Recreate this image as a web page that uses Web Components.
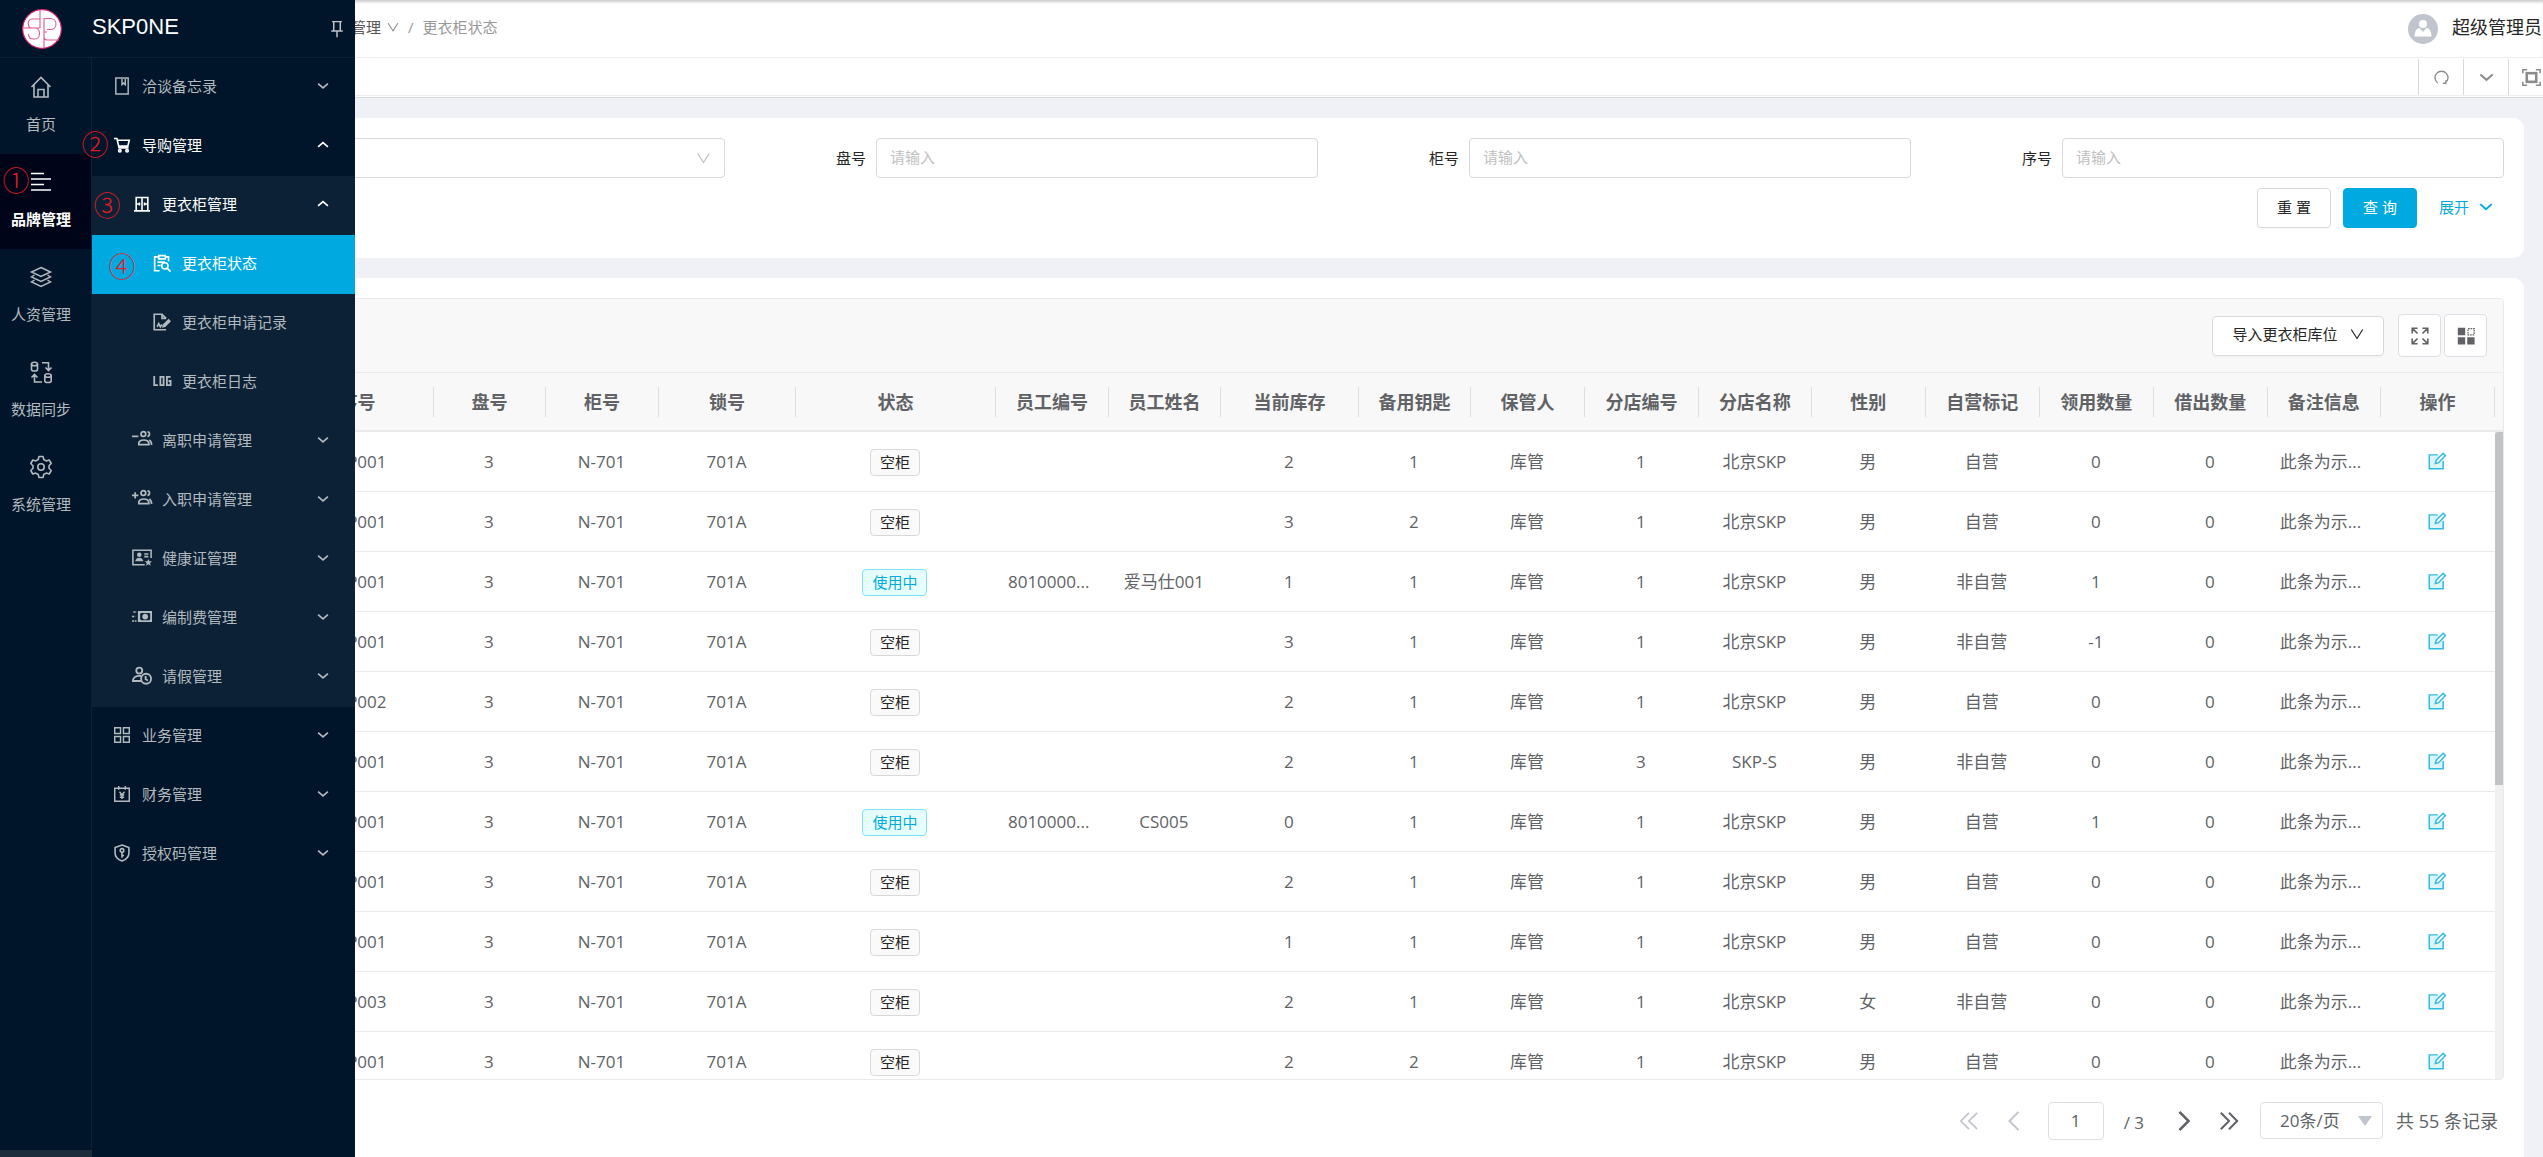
<!DOCTYPE html>
<html lang="zh-CN">
<head>
<meta charset="utf-8">
<title>SKP0NE</title>
<style>
html,body{margin:0;height:100%}
body{font-family:"Open Sans","Noto Sans CJK SC",sans-serif;font-size:15px;line-height:24px;color:#262626;background:#eff1f6;overflow:hidden;
--brand:#00a9df;--line:#e8eaec;--field:#d9d9d9;--navy:#001529;--muted:#606266}
</style>
</head>
<body>
<app-shell></app-shell>
<script>
const S='fill="none" stroke="currentColor"';
const ICONS={
home:`<g ${S} stroke-width="1.6"><path d="M1.500 11 11 1.500l9.500 9.500M4 9v12h14V9M8 21v-7.500h6V21"/></g>`,
list:`<g ${S} stroke-width="1.6"><path d="M1 2.500h13M1 8h20M1 13.500h13M1 19h20"/></g>`,
layers:`<g ${S} stroke-width="1.500"><path d="M11 1.500 20.500 6 11 10.500 1.500 6zM4.500 9l-3 2 9.500 4.500 9.500-4.500-3-2M4.500 14l-3 2 9.500 4.500 9.500-4.500-3-2"/></g>`,
sync:`<g ${S} stroke-width="1.600"><ellipse cx="4.500" cy="3" rx="3" ry="1.800"/><path d="M1.500 3v5.500c0 2 6 2 6 0V3"/><ellipse cx="18" cy="14.500" rx="3.200" ry="1.800"/><path d="M14.800 14.500V20c0 2 6.400 2 6.400 0v-5.500M12 1.800h6.500V9M15.500 6.500l3 3 3-3M12 21H4.500v-7M1.500 16.500l3-3 3 3"/></g>`,
gear:`<g ${S} stroke-width="1.600"><path d="M9 1.500h4l.8 3 2.400 1.400 3-.9 2 3.500-2.200 2.200v2.600l2.200 2.200-2 3.500-3-.9-2.400 1.400-.8 3H9l-.8-3-2.400-1.400-3 .9-2-3.500L3 13.300v-2.600L.8 8.500l2-3.500 3 .9 2.400-1.400z" stroke-linejoin="round" transform="translate(0 -1)"/><circle cx="11" cy="11" r="3.200"/></g>`,
pin:`<g ${S} stroke-width="1.800"><path d="M5 2h12M7 2v10.500M15 2v10.500M4 13.500h14M11 13.500V21"/></g>`,
book:`<g ${S} stroke-width="2"><rect x="2.500" y="0" width="17" height="22"/><path d="M11 1v8l2.200-2L15.500 9V1"/></g>`,
cart:`<g ${S} stroke-width="2.200"><path d="M0 2h4l3 13h13M5 4.500h16l-2 8H7"/><circle cx="8" cy="19" r="1.700"/><circle cx="18" cy="19" r="1.700"/></g>`,
locker:`<g ${S} stroke-width="2.200"><path d="M3 20V2h16v18M0 20.500h22M11 2v18M3 11h4M15 11h4"/><path d="M7.500 9v4M14.500 9v4"/></g>`,
clip:`<g ${S} stroke-width="2"><path d="M8 20.500H2V3.500h4M15 3.500h4V9"/><path d="M7 2h8v4H7zM5.500 10h9M5.500 14h4"/><circle cx="14.500" cy="14.500" r="3.800"/><path d="m17.500 17.500 4 4"/></g>`,
doc:`<g ${S} stroke-width="2"><path d="M16 20.500H1.500v-19H11l5 5M11 1.500v5h5"/><path d="M5 17l2-4 2 4 2-3"/></g><path fill="currentColor" d="m11 18 1-4 7-7 3 3-7 7z"/>`,
log:`<g ${S} stroke-width="2.200"><path d="M1.500 5v11H6M9 6h4v10H9zM21.500 6H17v10h4.500v-5H19"/></g>`,
minusp:`<g ${S} stroke-width="1.900"><path d="M0 7h7"/><circle cx="12.500" cy="4.500" r="2.600"/><path d="M7.500 16v-2c1.500-4 9.500-4 11 0v2zM17 2c3 0 3 5 0 5M19 11c2 1 2.500 2 2.500 5.500"/></g>`,
plusp:`<g ${S} stroke-width="1.900"><path d="M0 7h7M3.500 3.500v7"/><circle cx="12.500" cy="4.500" r="2.600"/><path d="M7.500 16v-2c1.500-4 9.500-4 11 0v2zM17 2c3 0 3 5 0 5M19 11c2 1 2.500 2 2.500 5.500"/></g>`,
card:`<g ${S} stroke-width="1.700"><path d="M14 18.500H1V2.500h20V11M13.500 6.500H18M13.500 9.500H18"/></g><g fill="currentColor"><circle cx="8" cy="7.500" r="2.500"/><path d="M3.500 14.500c1-5 8-5 9 0zM18 12l1.100 2.500 2.900.2-2.200 1.800.8 2.900-2.600-1.600-2.600 1.600.8-2.900-2.200-1.800 2.900-.2z"/></g>`,
money:`<path fill="currentColor" fill-rule="evenodd" d="M6.500 4.500H22v12H6.500zm2.500 3v6l1 1h9l1-1v-6l-1-1h-9z"/><circle cx="14.500" cy="10.500" r="3.200" fill="currentColor"/><g ${S} stroke-width="1.600"><path d="M1.500 5.500H5M0 10.500h3.500M0 15.500h5" stroke-dasharray="2.500 .8"/></g>`,
leave:`<g ${S} stroke-width="2"><circle cx="8" cy="5" r="3.300"/><path d="M10 16.500H1c0-4 3-6 9-5.500"/><circle cx="15.500" cy="14" r="5.500"/><path d="M15 11v3.500l2.500 1.500"/></g>`,
grid:`<g ${S} stroke-width="2"><path d="M1 1h8v8H1zM13 1h8v8h-8zM1 13h8v8H1zM13 13h8v8h-8z"/></g>`,
yen:`<g ${S} stroke-width="2"><path d="M1 3h20v18H1zM6.500 0v5M15.500 0v5M7.500 8l3.500 4 3.500-4M11 12v6M8 12.500h6M8 15.500h6"/></g>`,
shield:`<g ${S} stroke-width="2.200"><path d="M11 0 20.500 3.500v8c0 4.500-3.500 8.500-9.500 10.500C5 20 1.500 16 1.500 11.500v-8z"/><circle cx="11" cy="7.500" r="2.500"/><path d="M11 10v7.500M11 14.500h2.800"/></g>`,
down:`<path ${S} stroke-width="3" d="m2 6.500 9 8 9-8"/>`,
up:`<path ${S} stroke-width="3" d="m2 14.500 9-8 9 8"/>`,
vee:`<path ${S} stroke-width="1.900" d="m2 4 9 14 9-14"/>`,
refresh:`<path ${S} stroke-width="2" d="M5.500 19a9.500 9.500 0 1 1 11 0M13 19.500h4.500V15"/>`,
full:`<g ${S} stroke-width="1.800"><path d="M1 6V2h5M16 2h5v4M21 16v4h-5M6 20H1v-4"/><rect x="5.500" y="6" width="11" height="10" stroke-width="3"/></g>`,
expand:`<g ${S} stroke-width="2"><path d="M1.500 8V1.500H8M2 2l6 6M14 1.500h6.500V8M20 2l-6 6M1.500 14v6.500H8M2 20l6-6M14 20.500h6.500V14M20 20l-6-6"/></g>`,
custom:`<path fill="currentColor" d="M1 1h9v9H1zM1 12.500h9v9H1zM12.500 12.500h9v9h-9z"/><path ${S} stroke-width="1.500" stroke-dasharray="2 1" d="M13.500 2h7.500v7.500h-7.500z"/>`,
edit:`<path fill="#dcf4fc" d="M2 4h17v16H2z"/><g ${S} stroke-width="1.800"><path d="M12 3.500H1.500v17h17V11"/><path fill="#fff" d="m9 14 1-4L18.500 1.500l2.800 2.800L13 13z"/></g>`,
first:`<path ${S} stroke-width="1.900" d="m11 2-9 9 9 9M20 2l-9 9 9 9"/>`,
prev:`<path ${S} stroke-width="2.200" d="m16 1-10 10 10 10"/>`,
next:`<path ${S} stroke-width="2.800" d="m6 1 10 10L6 21"/>`,
last:`<path ${S} stroke-width="2.200" d="m2 2 9 9-9 9M11 2l9 9-9 9"/>`
};
const base='*{box-sizing:border-box}a{color:inherit;text-decoration:none}button,input,select{font:inherit;color:inherit;margin:0}';
function define(name,html){
  customElements.define(name,class extends HTMLElement{
    connectedCallback(){
      if(this.shadowRoot)return;
      const r=this.attachShadow({mode:'open'});
      const t=document.createElement('template');
      t.innerHTML=typeof html==='function'?html(this):html;
      r.append(t.content.cloneNode(true));
    }
  });
}
define('ui-icon',h=>`<style>:host{display:inline-flex;flex:none;width:18px;height:18px}svg{width:100%;height:100%;display:block;overflow:visible}</style><svg viewBox="0 0 22 22" aria-hidden="true">${ICONS[h.getAttribute('name')]}</svg>`);

define('app-brand',`<style>${base}
:host{display:flex;align-items:center;height:58px;padding:0 9px 0 22px;border-bottom:1px solid #0c2135;color:#fff}
.logo{width:40px;height:40px}
h1{flex:1;margin:0 0 0 30px;padding-bottom:3px;font:400 22px/32px "Liberation Sans",sans-serif}
button{display:flex;padding:0;border:0;background:none;color:#bfc4c9}
</style>
<svg class="logo" viewBox="0 0 40 40" aria-hidden="true"><circle cx="20" cy="20" r="19.300" fill="#fff" stroke="#d6216f" stroke-width="1.200"/><g fill="none" stroke="#df5a93" stroke-width="1.100"><path d="M18 1v18M0 19h17.500M18 10H10c-5 0-5 9 0 9h3c6 0 6 11 0 11h-2c-3 0-4.500-2-4.500-5M22 39V9.500h6c8 0 8 11 0 11h-3M22 20.500V28c0 2 1 3 3 3h12M22 23h3"/></g></svg>
<h1>SKP0NE</h1><button aria-label="pin"><ui-icon name="pin"></ui-icon></button>`);

define('rail-item',h=>`<style>${base}
:host{display:block}
a{display:flex;flex-direction:column;align-items:center;gap:14px;height:95px;padding:17px 9px 0 0;color:#b2b9bf;white-space:nowrap}
:host([active]) a{background:#000418;color:#fff;font-weight:700}
ui-icon{width:22px;height:22px}
</style><a href="#"><ui-icon name="${h.getAttribute('icon')}"></ui-icon><span><slot></slot></span></a>`);

define('menu-item',h=>`<style>${base}
:host{display:block}
a{display:flex;align-items:center;height:59px;color:#b2b9bf;padding:0 26px 3px calc(var(--lv)*20px);white-space:nowrap}
:host([sub]) a{background:#0c2135}
:host([open]) a,:host([active]) a{color:#fff}
:host([active]) a{background:var(--brand)}
.i{display:flex;justify-content:center;width:20px;margin-right:10px}
.i ui-icon{width:16px;height:16px}
:host([level="2"]) .i ui-icon{width:20px;height:20px}
:host([level="2"][open]) .i ui-icon{width:16px;height:16px}
:host([level="3"]) .i ui-icon{width:18px;height:18px}
.t{flex:1}
.c{width:12px;height:12px}
</style><a href="#" style="--lv:${h.getAttribute('level')}"><span class="i"><ui-icon name="${h.getAttribute('icon')}"></ui-icon></span><span class="t"><slot></slot></span>${h.getAttribute('level')==='3'?'':`<ui-icon class="c" name="${h.hasAttribute('open')?'up':'down'}"></ui-icon>`}</a>`);

define('step-mark',`<style>:host{position:absolute;left:var(--x);top:var(--y);transform:translate(-50%,-50%);font:300 27px/28px "Noto Sans CJK SC",sans-serif;color:#e01b24;z-index:3}</style><slot></slot>`);

define('app-sidebar',`<style>${base}
:host{position:fixed;left:0;top:0;bottom:0;width:355px;display:flex;flex-direction:column;background:var(--navy);z-index:2}
.cols{flex:1;display:flex;min-height:0}
.rail{width:92px;display:flex;flex-direction:column}
.rail nav{flex:1;border-right:1px solid #0c2135;padding-top:1px}
.trigger{height:7px;margin-top:2px;border:0;padding:0;background:#1d2c3b}
.menu{flex:1}
</style>
<app-brand></app-brand>
<div class="cols">
<div class="rail"><nav>
<rail-item icon="home">首页</rail-item><rail-item icon="list" active>品牌管理</rail-item><rail-item icon="layers">人资管理</rail-item><rail-item icon="sync">数据同步</rail-item><rail-item icon="gear">系统管理</rail-item>
</nav><button class="trigger" aria-label="toggle"></button></div>
<nav class="menu">
<menu-item level="1" icon="book">洽谈备忘录</menu-item>
<menu-item level="1" icon="cart" open>导购管理</menu-item>
<menu-item level="2" icon="locker" open sub>更衣柜管理</menu-item>
<menu-item level="3" icon="clip" sub active>更衣柜状态</menu-item>
<menu-item level="3" icon="doc" sub>更衣柜申请记录</menu-item>
<menu-item level="3" icon="log" sub>更衣柜日志</menu-item>
<menu-item level="2" icon="minusp" sub>离职申请管理</menu-item>
<menu-item level="2" icon="plusp" sub>入职申请管理</menu-item>
<menu-item level="2" icon="card" sub>健康证管理</menu-item>
<menu-item level="2" icon="money" sub>编制费管理</menu-item>
<menu-item level="2" icon="leave" sub>请假管理</menu-item>
<menu-item level="1" icon="grid">业务管理</menu-item>
<menu-item level="1" icon="yen">财务管理</menu-item>
<menu-item level="1" icon="shield">授权码管理</menu-item>
</nav></div>
<step-mark style="--x:16px;--y:180px">①</step-mark>
<step-mark style="--x:95px;--y:144px">②</step-mark>
<step-mark style="--x:107px;--y:205px">③</step-mark>
<step-mark style="--x:122px;--y:266px">④</step-mark>`);

define('app-header',`<style>${base}
:host{display:block;background:#fff}
.bar{display:flex;align-items:center;height:58px;padding:0 1px 0 214px;border-bottom:1px solid #ededed;box-shadow:inset 0 3px 3px -1px #ccc}
.crumbs{flex:1;display:flex;align-items:center;color:#999;padding-bottom:3px}
.crumbs a{display:flex;align-items:center;gap:6px;color:#555}
.crumbs ui-icon{width:12px;height:12px;color:#888}
.sep{margin:0 9px}
.user{display:flex;align-items:center;gap:14px;font-size:18px}
.user span{padding-bottom:4px}
.user svg{width:30px;height:30px}
.tabs{display:flex;height:40px;border-bottom:1px solid #d9d9d9;overflow:hidden}
.tabs div{display:flex;margin-right:-10px;height:38px;border-bottom:1px solid #ededed;flex:1;justify-content:flex-end}
button{display:flex;align-items:center;justify-content:center;width:45px;height:36px;margin-top:1px;padding:0;border:0;border-left:1px solid var(--field);background:none;color:#8c8c8c}
button ui-icon{width:15px;height:15px}
button:last-child ui-icon{width:19px;height:19px}
</style>
<div class="bar"><nav class="crumbs"><a href="#">更衣柜管理<ui-icon name="vee"></ui-icon></a><span class="sep">/</span><span>更衣柜状态</span></nav>
<div class="user"><svg viewBox="0 0 30 30" aria-hidden="true"><circle cx="15" cy="15" r="15" fill="#c0c4cc"/><g fill="#fff"><circle cx="15" cy="10" r="4"/><path d="M6.500 22.500c0-5 2-8 5-8.500l3.500 4 3.500-4c3 .5 5 3.500 5 8.500z"/></g></svg><span>超级管理员</span></div></div>
<div class="tabs"><div><button aria-label="refresh"><ui-icon name="refresh"></ui-icon></button><button aria-label="tabs"><ui-icon name="down"></ui-icon></button><button aria-label="fullscreen"><ui-icon name="full"></ui-icon></button></div></div>`);

define('form-field',h=>{const l=h.getAttribute('label'),s=h.hasAttribute('select');return `<style>${base}
:host{flex:1;display:flex;align-items:center;min-width:0}
label{width:151px;padding-right:10px;text-align:right}
.box{flex:1;position:relative;display:flex;min-width:0}
input,select{width:100%;height:40px;padding:0 13px 2px;border:1px solid var(--field);border-radius:4px;background:#fff;appearance:none}
input::placeholder{color:#bfbfbf;opacity:1}
ui-icon{position:absolute;right:14px;top:13px;width:15px;height:14px;color:#bfbfbf}
</style><label for="f">${l}</label><div class="box">${s?'<select id="f" aria-label="select"><option></option></select><ui-icon name="vee"></ui-icon>':'<input id="f" placeholder="请输入">'}</div>`});

define('search-form',`<style>${base}
:host{display:block;background:#fff;border-radius:10px;padding:20px 20px 30px}
.row{display:flex}
.actions{display:flex;justify-content:flex-end;align-items:center;gap:12px;margin-top:10px}
button{width:74px;height:40px;border:1px solid var(--field);border-radius:4px;background:#fff;padding:0 0 2px;box-shadow:0 2px 0 #00000005}
.go{background:var(--brand);border-color:var(--brand);color:#fff}
a{display:flex;align-items:center;gap:10px;margin:0 11px 0 10px;color:var(--brand);padding-bottom:2px}
a ui-icon{width:14px;height:14px}
</style>
<div class="row"><form-field label="" select></form-field><form-field label="盘号"></form-field><form-field label="柜号"></form-field><form-field label="序号"></form-field></div>
<div class="actions"><button>重 置</button><button class="go">查 询</button><a href="#">展开<ui-icon name="down"></ui-icon></a></div>`);

define('state-tag',`<style>:host{display:inline-block;height:27px;padding:0 9px;border:1px solid var(--field);border-radius:4px;background:#fafafa;color:#262626;font-size:15px;line-height:25px;vertical-align:middle;box-sizing:border-box}
:host([busy]){background:#e6fffe;border-color:#7ae7ff;color:var(--brand)}</style><slot></slot>`);

const COLS=[['',149],['序号',152],['盘号',112],['柜号',113],['锁号',137],['状态',200],['员工编号',113],['员工姓名',112],['当前库存',138],['备用钥匙',112],['保管人',114],['分店编号',114],['分店名称',113],['性别',114],['自营标记',114],['领用数量',114],['借出数量',114],['备注信息',113],['操作',114]];
const ROWS=[
['001','','','2','1','1','北京SKP','男','自营','0'],
['001','','','3','2','1','北京SKP','男','自营','0'],
['001','8010000...','爱马仕001','1','1','1','北京SKP','男','非自营','1'],
['001','','','3','1','1','北京SKP','男','非自营','-1'],
['002','','','2','1','1','北京SKP','男','自营','0'],
['001','','','2','1','3','SKP-S','男','非自营','0'],
['001','8010000...','CS005','0','1','1','北京SKP','男','自营','1'],
['001','','','2','1','1','北京SKP','男','自营','0'],
['001','','','1','1','1','北京SKP','男','自营','0'],
['003','','','2','1','1','北京SKP','女','非自营','0'],
['001','','','2','2','1','北京SKP','男','自营','0']];
define('data-table',()=>`<style>${base}
:host{flex:1;min-height:0;display:flex;overflow:hidden;color:var(--muted);font-size:17px}
.view{flex:1;min-width:0;overflow:hidden}
table{width:100%;table-layout:fixed;border-collapse:separate;border-spacing:0}
th{height:59px;padding:0;background:#f8f8f8;border-bottom:2px solid var(--line);font-weight:700;font-size:18px;line-height:24px;white-space:nowrap}
th div{display:flex;align-items:center;justify-content:center;height:30px;border-right:1px solid #dcdfe2}
td{height:60px;padding:1px 2px 0 0;border-bottom:1px solid var(--line);text-align:center;white-space:nowrap}
td.cut{text-align:left;padding-left:12px}
td a{color:#2fbbe4;display:flex;justify-content:center;padding-bottom:2px}
.scroll{width:8px;display:flex;flex-direction:column;background:#f1f1f1}
.scroll i{height:59px;background:#f8f8f8;border-bottom:2px solid var(--line)}
.scroll b{height:50%;background:#c1c3c5;border-radius:3px 0 0 0}
</style><div class="view"><table><colgroup>${COLS.map(c=>`<col style="width:${(c[1]/23.62).toFixed(3)}%">`).join('')}</colgroup>
<thead><tr>${COLS.map(c=>`<th><div>${c[0]}</div></th>`).join('')}</tr></thead><tbody>
${ROWS.map(r=>`<tr><td></td><td>SKP${r[0]}</td><td>3</td><td>N-701</td><td>701A</td><td>${r[1]?'<state-tag busy>使用中</state-tag>':'<state-tag>空柜</state-tag>'}</td><td class="cut">${r[1]}</td><td>${r[2]}</td><td>${r[3]}</td><td>${r[4]}</td><td>库管</td><td>${r[5]}</td><td>${r[6]}</td><td>${r[7]}</td><td>${r[8]}</td><td>${r[9]}</td><td>0</td><td class="cut">此条为示...</td><td><a href="#" aria-label="edit"><ui-icon name="edit"></ui-icon></a></td></tr>`).join('')}
</tbody></table></div><div class="scroll"><i></i><b></b></div>`);

define('page-bar',`<style>${base}
:host{display:flex;align-items:center;justify-content:flex-end;height:77px;padding:4px 6px 0 0;font-size:17px;color:var(--muted)}
button{display:flex;padding:0;border:0;background:none}
button:disabled{color:#c0c4cc}
ui-icon{width:20px;height:20px}
.pn{display:flex;gap:25px}
.no{width:56px;height:38px;margin:0 20px 0 24px;border:1px solid #dcdfe6;border-radius:4px;text-align:center;padding:0}
.n{margin:4px 30px 0 0}
.size{position:relative;margin:0 13px 0 21px}
select{width:123px;height:37px;padding:0 0 0 19px;border:1px solid #dcdfe6;border-radius:4px;background:#fff;appearance:none}
.size::after{content:"";position:absolute;right:11px;top:14px;border:7px solid transparent;border-top:10px solid #c0c4cc;border-bottom:0;pointer-events:none}
.total{font-size:18px}
</style>
<div class="pn"><button disabled aria-label="first"><ui-icon name="first"></ui-icon></button><button disabled aria-label="prev"><ui-icon name="prev"></ui-icon></button></div>
<input class="no" value="1" aria-label="page"><span class="n">/ 3</span>
<div class="pn"><button aria-label="next"><ui-icon name="next"></ui-icon></button><button aria-label="last"><ui-icon name="last"></ui-icon></button></div>
<div class="size"><select aria-label="page size"><option>20条/页</option></select></div><span class="total">共 55 条记录</span>`);

define('table-card',`<style>${base}
:host{flex:1;min-height:0;display:flex;flex-direction:column;background:#fff;border-radius:10px 10px 0 0;padding:20px 20px 0}
.frame{flex:1;min-height:0;display:flex;flex-direction:column;border:1px solid var(--line);border-radius:4px;overflow:hidden}
.tools{display:flex;align-items:center;justify-content:flex-end;height:74px;padding:0 16px;background:#f8f8f8;border-bottom:1px solid var(--line)}
button{display:flex;align-items:center;justify-content:center;border:1px solid var(--field);border-radius:4px;background:#fff;padding:0}
.imp{width:172px;height:40px;gap:12px;margin-right:14px;padding-bottom:3px;box-shadow:0 2px 0 #00000005}
.imp ui-icon{width:14px;height:14px}
.sq{width:43px;height:43px;border-color:#dcdfe6;color:var(--muted);margin-left:3px}
.sq:nth-child(2){margin-left:0}
</style>
<div class="frame"><div class="tools"><button class="imp">导入更衣柜库位<ui-icon name="vee"></ui-icon></button><button class="sq" aria-label="zoom"><ui-icon name="expand"></ui-icon></button><button class="sq" aria-label="columns"><ui-icon name="custom"></ui-icon></button></div>
<data-table></data-table></div><page-bar></page-bar>`);

define('app-shell',`<style>${base}
:host{display:flex;flex-direction:column;height:100vh;padding-left:92px}
main{flex:1;min-height:0;display:flex;flex-direction:column;gap:20px;padding:20px 19px 0 20px}
</style><app-sidebar></app-sidebar><app-header></app-header><main><search-form></search-form><table-card></table-card></main>`);
</script>
</body>
</html>
